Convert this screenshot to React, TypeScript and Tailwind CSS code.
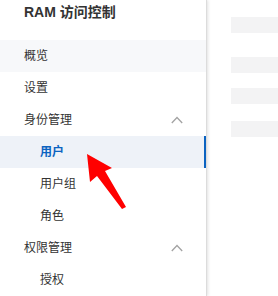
import type { ReactNode } from "react";

const font = { fontFamily: '"Liberation Sans", "Noto Sans CJK SC", sans-serif' };

const Chevron = () => (
  <svg width="12" height="8" viewBox="0 0 12 8" className="shrink-0">
    <polyline points="0.8,7 6,1.5 11.2,7" fill="none" stroke="#a3a3a3" strokeWidth="1.3" />
  </svg>
);

type RowProps = {
  children: ReactNode;
  indent?: boolean;
  active?: boolean;
  hover?: boolean;
  toggle?: boolean;
};

const Row = ({ children, indent, active, hover, toggle }: RowProps) => (
  <div
    className={`relative flex h-8 items-center justify-between pr-[23px] text-[12px] ${
      indent ? "pl-10" : "pl-6"
    } ${active ? "bg-[#eef2f8] font-semibold text-[#0b63c1]" : "text-[#333333]"} ${
      hover ? "bg-[#f7f8fa]" : ""
    }`}>
    <span>{children}</span>
    {toggle && <Chevron />}
    {active && <span className="absolute top-0 right-0 h-full w-[2px] bg-[#0b63c1]" />}
  </div>
);

const App = () => {
  return (
    <div className="relative flex h-[296px] w-[278px] overflow-hidden bg-white" style={font}>
      <aside className="flex w-[207px] shrink-0 flex-col border-r border-[#dcdcdc] shadow-[1px_0_3px_rgba(0,0,0,0.12)]">
        <div className="h-[40px] shrink-0 pt-[3px] pl-6 text-[14px] leading-[18px] font-semibold text-[#333333]">
          RAM 访问控制
        </div>
        <Row hover>概览</Row>
        <Row>设置</Row>
        <Row toggle>身份管理</Row>
        <Row indent active>
          用户
        </Row>
        <Row indent>用户组</Row>
        <Row indent>角色</Row>
        <Row toggle>权限管理</Row>
        <Row indent>授权</Row>
      </aside>
      <main className="flex flex-1 flex-col pl-[24px]">
        <div className="mt-[17px] h-4 bg-[#f3f3f4]" />
        <div className="mt-6 h-4 bg-[#f3f3f4]" />
        <div className="mt-[15px] h-4 bg-[#f3f3f4]" />
        <div className="mt-[17px] h-4 bg-[#f3f3f4]" />
      </main>
      <svg className="absolute top-0 left-0" width="278" height="296" viewBox="0 0 278 296">
        <polygon
          points="87,154 112,168 105,171 126,207 122,209 97,176 90,182"
          fill="#ff0000"
        />
      </svg>
    </div>
  );
};

export default App;
